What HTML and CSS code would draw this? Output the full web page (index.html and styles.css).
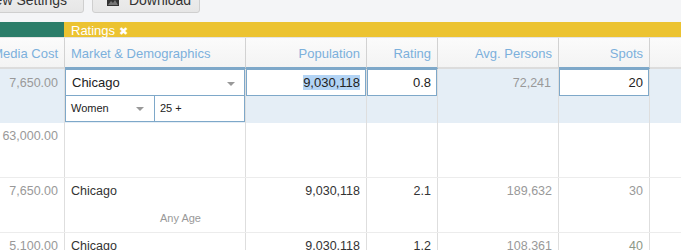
FILE: index.html
```html
<!DOCTYPE html>
<html lang="en">
<head>
    <meta charset="UTF-8">
    <title>Ratings</title>
    <link rel="stylesheet" href="styles.css">
</head>
<body>
    <div class="page">
        <div class="toolbar">
            <button class="btn btn-settings">View Settings</button>
            <button class="btn btn-download">
                <svg class="btn-icon" width="12" height="10" viewBox="0 0 12 10">
                    <rect x="0" y="0" width="12" height="10" fill="#333"/>
                    <path d="M1 9 L4 5 L6 7 L8 4 L11 9 Z" fill="#777"/>
                </svg>
                Download
            </button>
        </div>

        <div class="band">
            <div class="band-left"></div>
            <div class="band-ratings">Ratings <span class="band-close">&#10006;</span></div>
        </div>

        <div class="grid head">
            <div class="cell">Media Cost</div>
            <div class="cell left edit">Market &amp; Demographics</div>
            <div class="cell edit">Population</div>
            <div class="cell edit">Rating</div>
            <div class="cell">Avg. Persons</div>
            <div class="cell edit">Spots</div>
            <div class="cell last"></div>
        </div>

        <div class="grid row active">
            <div class="cell muted">7,650.00</div>
            <div class="cell market">
                <div class="field select">Chicago<span class="caret"></span></div>
                <div class="demo">
                    <div class="field select small">Women<span class="caret"></span></div>
                    <div class="field small age">25 +</div>
                </div>
            </div>
            <div class="cell">
                <div class="field num"><span class="sel">9,030,118</span></div>
            </div>
            <div class="cell">
                <div class="field num">0.8</div>
            </div>
            <div class="cell muted pad">72,241</div>
            <div class="cell">
                <div class="field num">20</div>
            </div>
            <div class="cell last"></div>
        </div>

        <div class="grid row">
            <div class="cell muted">63,000.00</div>
            <div class="cell"></div>
            <div class="cell"></div>
            <div class="cell"></div>
            <div class="cell"></div>
            <div class="cell"></div>
            <div class="cell last"></div>
        </div>

        <div class="grid row">
            <div class="cell muted">7,650.00</div>
            <div class="cell left">
                Chicago
                <div class="any-age">Any Age</div>
            </div>
            <div class="cell">9,030,118</div>
            <div class="cell">2.1</div>
            <div class="cell muted">189,632</div>
            <div class="cell muted">30</div>
            <div class="cell last"></div>
        </div>

        <div class="grid row">
            <div class="cell muted">5,100.00</div>
            <div class="cell left">Chicago</div>
            <div class="cell">9,030,118</div>
            <div class="cell">1.2</div>
            <div class="cell muted">108,361</div>
            <div class="cell spots-green">40</div>
            <div class="cell last"></div>
        </div>
    </div>
</body>
</html>
```

FILE: styles.css
```css
body {
    margin: 0;
    background-color: #fff;
    font-family: "Liberation Sans", Arial, sans-serif;
    overflow: hidden;
}
.page {
    margin-left: -20px;
    width: 701px;
}
.toolbar {
    height: 22px;
    background-color: #f4f5f7;
    position: relative;
    overflow: hidden;
}
.btn {
    position: absolute;
    top: -14px;
    height: 27px;
    border: 1px solid #cfcfcf;
    border-radius: 3px;
    background: linear-gradient(#f0f0f0, #e6e6e6);
    font-family: "Liberation Sans", Arial, sans-serif;
    font-size: 14px;
    color: #333;
    padding: 0 8px;
    white-space: nowrap;
}
.btn-settings {
    left: -20px;
    width: 124px;
    text-align: right;
    padding-right: 16px;
}
.btn-download {
    left: 112px;
    width: 108px;
    text-align: left;
    padding-left: 14px;
}
.btn-icon {
    vertical-align: -1px;
    margin-right: 6px;
}
.band {
    display: flex;
    height: 15px;
}
.band-left {
    width: 84px;
    background-color: #2b7d69;
}
.band-ratings {
    flex: 1;
    background-color: #ecc331;
    color: #fff;
    font-size: 13px;
    line-height: 17px;
    padding-left: 7px;
}
.band-close {
    font-size: 11px;
}
.grid {
    display: grid;
    grid-template-columns: 85px 181px 121px 71px 121px 91px 1fr;
    box-sizing: border-box;
}
.cell {
    box-sizing: border-box;
    border-right: 1px solid #dedede;
    text-align: right;
    padding: 6px 6px 0 6px;
    font-size: 12.5px;
    line-height: 14px;
    color: #333;
}
.cell.left {
    text-align: left;
}
.cell.last {
    border-right: none;
}
.head {
    height: 32px;
    background: linear-gradient(#fbfbfb, #f3f3f3);
    border-top: 1px solid #e4e4e4;
}
.head .cell {
    font-size: 13px;
    color: #7cb0dc;
    padding-top: 9px;
    border-right-color: #d2d2d2;
    border-bottom: 2px solid #dcdcdc;
}
.head .cell.edit {
    border-bottom-color: #7ea8c9;
}
.head .cell.last {
    border-bottom-color: #dcdcdc;
}
.row {
    height: 55px;
    border-bottom: 1px solid #ececec;
}
.row.active {
    height: 54px;
    background-color: #e5eef6;
    border-bottom: none;
}
.row.active .cell {
    padding: 0;
}
.row.active .cell.muted {
    padding: 7px 6px 0 6px;
}
.row.active .cell.pad {
    padding-right: 7px;
}
.muted {
    color: #999;
}
.spots-green {
    color: #8d9886;
}
.field {
    box-sizing: border-box;
    height: 27px;
    border: 1px solid #7ea8c9;
    background-color: #fff;
    font-size: 13px;
    line-height: 25px;
    color: #222;
    text-align: left;
    padding: 0 6px;
    position: relative;
}
.field.num {
    text-align: right;
    padding-right: 5px;
}
.sel {
    background-color: #b3d4f5;
}
.caret {
    position: absolute;
    right: 9px;
    top: 12px;
    border-left: 4px solid transparent;
    border-right: 4px solid transparent;
    border-top: 4px solid #999;
}
.demo {
    display: grid;
    grid-template-columns: 90px 1fr;
}
.field.small {
    height: 26px;
    border-top: none;
    font-size: 11px;
    padding-left: 5px;
}
.field.small .caret {
    top: 11px;
    right: 10px;
}
.field.age {
    border-left: none;
    padding-left: 5px;
}
.any-age {
    font-size: 11px;
    color: #999;
    margin-top: 13px;
    padding-left: 89px;
}
```
